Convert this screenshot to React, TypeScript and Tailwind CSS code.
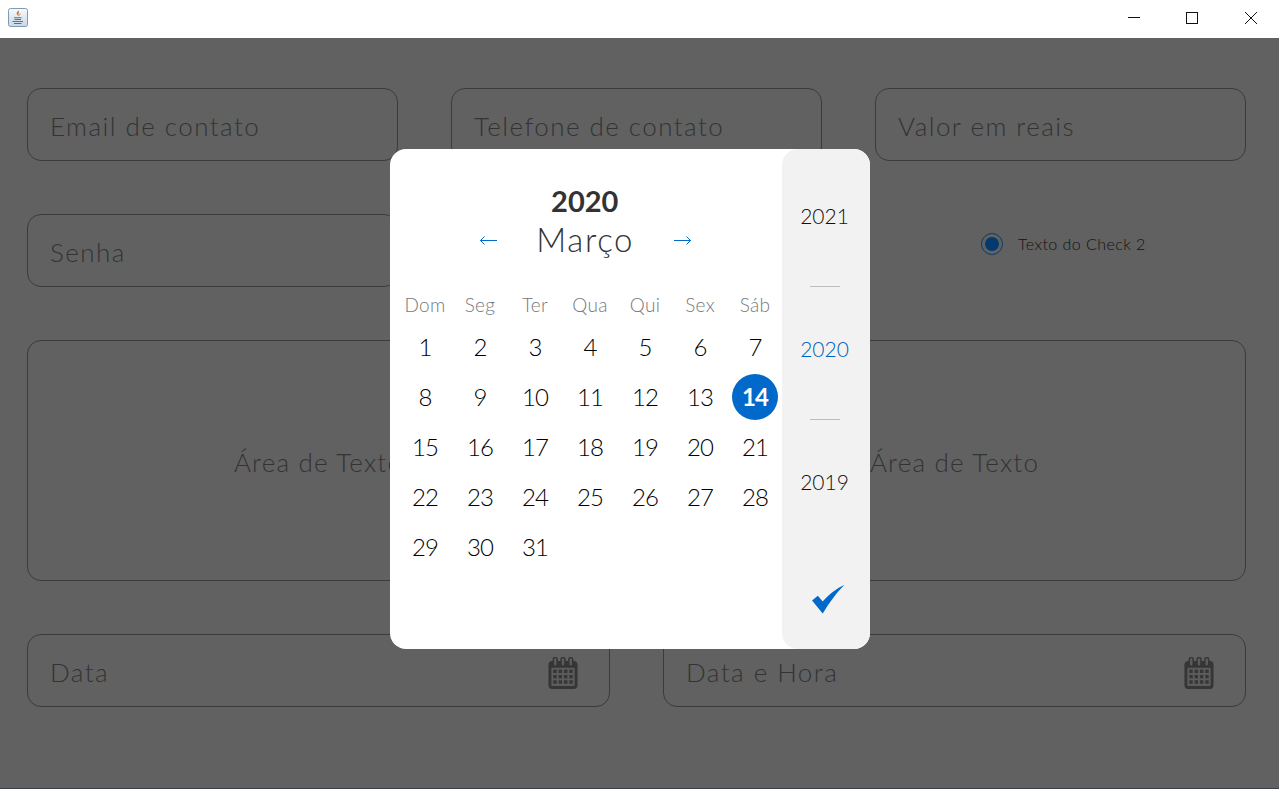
const font = "font-['Lato',_'Liberation_Sans',_sans-serif]";

function JavaIcon() {
  return (
    <svg width="20" height="19" viewBox="0 0 20 19" className="block">
      <defs>
        <linearGradient id="javaBg" x1="0" y1="0" x2="0" y2="1">
          <stop offset="0" stopColor="#f7fafc" />
          <stop offset="1" stopColor="#c9d8e6" />
        </linearGradient>
      </defs>
      <rect x="0.5" y="0.5" width="19" height="18" rx="2" fill="url(#javaBg)" stroke="#7d9bb5" />
      <path d="M10.5 2.500c1.500 1.500-1 3 .5 5.500-3-1-3-3.500-.5-5.500z" fill="#e8742a" />
      <path d="M12.500 5c.5 1.200-1 1.800-.8 3-1.200-.9-.6-2.200.8-3z" fill="#eb9352" />
      <path d="M6 9.200h7.500v1.100H6zM6.500 11h6.500v1.100H6.500zM4.500 13h10.500v1H4.500zM6 15h7.500v1H6z" fill="#4f7392" />
    </svg>
  );
}

function CalendarIcon() {
  return (
    <svg width="30" height="32" viewBox="0 0 30 33" className="block">
      <path d="M4 4h22a4 4 0 0 1 4 4v21a4 4 0 0 1-4 4H4a4 4 0 0 1-4-4V8a4 4 0 0 1 4-4z" fill="#363636" />
      <rect x="3" y="11" width="24" height="19" rx="1" fill="#5c5c5c" />
      {[5, 13, 21].map((x) => (
        <rect key={x} x={x} y="0.500" width="4" height="9" rx="2" fill="#5c5c5c" stroke="#363636" strokeWidth="1.500" />
      ))}
      {[13, 18.500, 24].map((y) =>
        [5, 10.500, 16, 21.500].map((x) => (
          <rect key={`${x}-${y}`} x={x} y={y} width="3.500" height="3.500" fill="#363636" />
        )),
      )}
    </svg>
  );
}

function Arrow({ flip }: { flip?: boolean }) {
  return (
    <svg
      width="17"
      height="9"
      viewBox="0 0 17 9"
      fill="none"
      stroke="#0069c9"
      strokeWidth="1"
      className={flip ? "block -scale-x-100" : "block"}
    >
      <path d="M0.500 4.500H17M4.500 0.500L0.500 4.500L4.500 8.500" />
    </svg>
  );
}

function Field({ label, icon }: { label: string; icon?: boolean }) {
  return (
    <div className="flex h-[73px] items-center justify-between rounded-[14px] border border-[#3b3b3b] pl-[22px] pr-[31px] pt-[4px] text-[26px] font-light tracking-[1.45px] text-[#333333]">
      <span>{label}</span>
      {icon ? <CalendarIcon /> : null}
    </div>
  );
}

function TextArea() {
  return (
    <div className="flex h-[241px] items-center justify-center rounded-[14px] border border-[#3b3b3b] pt-[4px] text-[26px] font-light tracking-[1.2px] text-[#333333]">
      Área de Texto
    </div>
  );
}

const weekDays = ["Dom", "Seg", "Ter", "Qua", "Qui", "Sex", "Sáb"];
const days = Array.from({ length: 31 }, (_, i) => i + 1);

function YearPicker() {
  return (
    <div className="flex w-[88px] flex-col items-center rounded-[16px] bg-[#f2f2f2]">
      <span className="mr-[3px] mt-[52px] text-[21px] font-light leading-[30px] text-[#111111]">2021</span>
      <span className="mr-[3px] mt-[55px] h-px w-[30px] bg-[#bdbdbd]" />
      <span className="mr-[3px] mt-[47px] text-[21px] font-light leading-[30px] text-[#0062bd]">2020</span>
      <span className="mr-[3px] mt-[55px] h-px w-[30px] bg-[#bdbdbd]" />
      <span className="mr-[3px] mt-[47px] text-[21px] font-light leading-[30px] text-[#111111]">2019</span>
      <svg width="33" height="29" viewBox="0 0 34 30" className="ml-[5px] mt-[88px] block">
        <path d="M0 16 L6 11 L11 17 C17 10 26 3 33.500 0 C26 7 18 18 11 29.500 Z" fill="#0069c9" />
      </svg>
    </div>
  );
}

function DatePicker() {
  return (
    <div className="absolute left-[390px] top-[149px] flex h-[500px] w-[480px] justify-between rounded-[16px] bg-white">
      <div className="w-[392px] pl-[7.500px] pt-[36px]">
        <div className="pr-[10px] text-center text-[29px] font-bold leading-[32px] text-[#333333]">2020</div>
        <div className="mt-[3px] flex h-[40px] items-center justify-center pr-[9px] text-[#333333]">
          <Arrow />
          <span className="w-[177px] text-center text-[33px] font-light tracking-[1.6px]">Março</span>
          <Arrow flip />
        </div>
        <div className="mt-[28px] grid w-[385px] grid-cols-7">
          {weekDays.map((d) => (
            <div
              key={d}
              className="flex h-[34px] items-center justify-center text-[19px] font-light tracking-[0.3px] text-[#77777d]"
            >
              {d}
            </div>
          ))}
          {days.map((d) => (
            <div
              key={d}
              className="flex h-[50px] items-center justify-center text-[24px] font-light tracking-[-0.8px] text-black"
            >
              {d === 14 ? (
                <span className="flex h-[46px] w-[46px] items-center justify-center rounded-full bg-[#0069c9] font-bold text-white">
                  {d}
                </span>
              ) : (
                d
              )}
            </div>
          ))}
        </div>
      </div>
      <YearPicker />
    </div>
  );
}

export default function App() {
  return (
    <div className={`relative flex h-[789px] w-[1279px] flex-col overflow-hidden bg-[#616161] ${font}`}>
      <header className="flex h-[38px] shrink-0 items-start justify-between bg-white">
        <div className="pl-2 pt-2">
          <JavaIcon />
        </div>
        <svg width="152" height="38" viewBox="0 0 152 38" className="block" fill="none" stroke="#111111" strokeWidth="1">
          <path d="M1 17.500h12" />
          <rect x="59.500" y="12.500" width="11" height="11" />
          <path d="M118 12l12 12M130 12l-12 12" />
        </svg>
      </header>
      <main className="flex flex-1 flex-col gap-[53px] border-b border-[#394049] pb-[81px] pl-[27px] pr-[33px] pt-[50px]">
        <div className="grid grid-cols-3 gap-x-[53px]">
          <Field label="Email de contato" />
          <Field label="Telefone de contato" />
          <Field label="Valor em reais" />
        </div>
        <div className="grid grid-cols-3 gap-x-[53px]">
          <Field label="Senha" />
          <div />
          <div className="flex items-center gap-[15px] pb-[14px] pl-[106px]">
            <span className="flex h-[22px] w-[22px] items-center justify-center rounded-full border border-[#0b3c6b]">
              <span className="h-[14px] w-[14px] rounded-full bg-[#03396f]" />
            </span>
            <span className="text-[16px] font-light tracking-[0.45px] text-[#111111]">Texto do Check 2</span>
          </div>
        </div>
        <div className="grid grid-cols-2 gap-x-[53px]">
          <TextArea />
          <TextArea />
        </div>
        <div className="grid grid-cols-2 gap-x-[53px]">
          <Field label="Data" icon />
          <Field label="Data e Hora" icon />
        </div>
      </main>
      <DatePicker />
    </div>
  );
}
